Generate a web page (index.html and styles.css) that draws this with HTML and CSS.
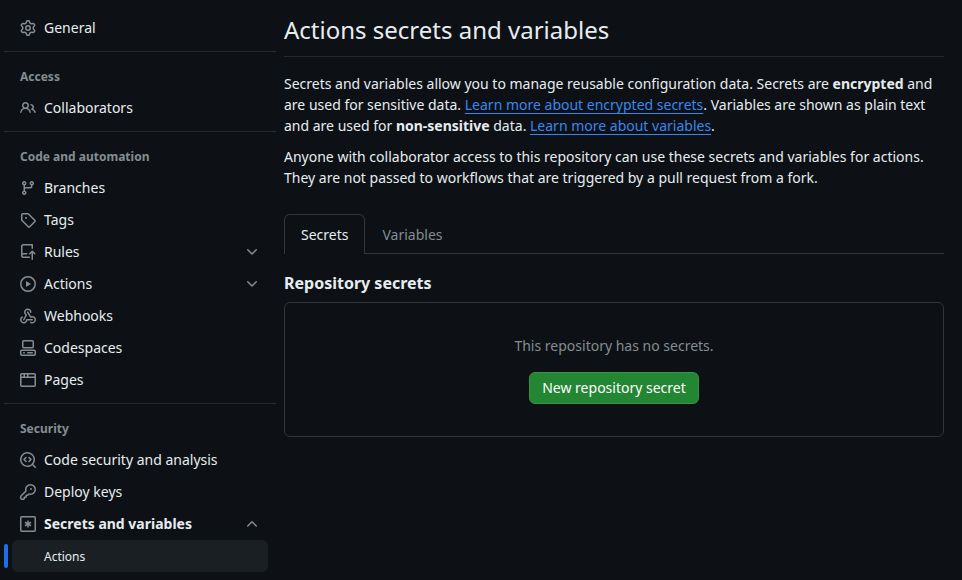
FILE: index.html
```html
<!DOCTYPE html>
<html lang="en">
<head>
<meta charset="utf-8">
<title>Actions secrets and variables</title>
<link rel="stylesheet" href="styles.css">
</head>
<body>
<div class="layout">
  <nav class="sidebar">
    <ul class="group">
      <li class="item"><svg class="icon" viewBox="0 0 16 16"><path d="M8 0a8.2 8.2 0 0 1 .701.031C9.444.095 9.99.645 10.16 1.29l.288 1.107c.018.066.079.158.212.224.231.114.454.243.668.386.123.082.233.09.299.071l1.103-.303c.644-.176 1.392.021 1.82.63.27.385.506.792.704 1.218.315.675.111 1.422-.364 1.891l-.814.806c-.049.048-.098.147-.088.294.016.257.016.515 0 .772-.01.147.038.246.088.294l.814.806c.475.469.679 1.216.364 1.891a7.977 7.977 0 0 1-.704 1.217c-.428.61-1.176.807-1.82.63l-1.102-.302c-.067-.019-.177-.011-.3.071a5.909 5.909 0 0 1-.668.386c-.133.066-.194.158-.211.224l-.29 1.106c-.168.646-.715 1.196-1.458 1.26a8.006 8.006 0 0 1-1.402 0c-.743-.064-1.289-.614-1.458-1.26l-.289-1.106c-.018-.066-.079-.158-.212-.224a5.738 5.738 0 0 1-.668-.386c-.123-.082-.233-.09-.299-.071l-1.103.303c-.644.176-1.392-.021-1.82-.63a8.12 8.12 0 0 1-.704-1.218c-.315-.675-.111-1.422.363-1.891l.815-.806c.05-.048.098-.147.088-.294a6.214 6.214 0 0 1 0-.772c.01-.147-.038-.246-.088-.294l-.815-.806C.635 6.045.431 5.298.746 4.623a7.92 7.92 0 0 1 .704-1.217c.428-.61 1.176-.807 1.82-.63l1.102.302c.067.019.177.011.3-.071.214-.143.437-.272.668-.386.133-.066.194-.158.211-.224l.29-1.106C6.009.645 6.556.095 7.299.03 7.53.01 7.764 0 8 0Zm-.571 1.525c-.036.003-.108.036-.137.146l-.289 1.105c-.147.561-.549.967-.998 1.189-.173.086-.34.183-.5.29-.417.278-.97.423-1.529.27l-1.103-.303c-.109-.03-.175.016-.195.045-.22.312-.412.644-.573.99-.014.031-.021.11.059.19l.815.806c.411.406.562.957.53 1.456a4.709 4.709 0 0 0 0 .582c.032.499-.119 1.05-.53 1.456l-.815.806c-.081.08-.073.159-.059.19.162.346.353.677.573.989.02.03.085.076.195.046l1.102-.303c.56-.153 1.113-.008 1.53.27.161.107.328.204.501.29.447.222.85.629.997 1.189l.289 1.105c.029.109.101.143.137.146a6.6 6.6 0 0 0 1.142 0c.036-.003.108-.036.137-.146l.289-1.105c.147-.561.549-.967.998-1.189.173-.086.34-.183.5-.29.417-.278.97-.423 1.529-.27l1.103.303c.109.029.175-.016.195-.045.22-.313.411-.644.573-.99.014-.031.021-.11-.059-.19l-.815-.806c-.411-.406-.562-.957-.53-1.456a4.709 4.709 0 0 0 0-.582c-.032-.499.119-1.05.53-1.456l.815-.806c.081-.08.073-.159.059-.19a6.464 6.464 0 0 0-.573-.989c-.02-.03-.085-.076-.195-.046l-1.102.303c-.56.153-1.113.008-1.53-.27a4.44 4.44 0 0 0-.501-.29c-.447-.222-.85-.629-.997-1.189l-.289-1.105c-.029-.11-.101-.143-.137-.146a6.6 6.6 0 0 0-1.142 0ZM11 8a3 3 0 1 1-6 0 3 3 0 0 1 6 0ZM9.5 8a1.5 1.5 0 1 0-3.001.001A1.5 1.5 0 0 0 9.5 8Z"/></svg><span>General</span></li>
    </ul>
    <ul class="group">
      <li class="heading">Access</li>
      <li class="item"><svg class="icon" viewBox="0 0 16 16"><path d="M2 5.5a3.5 3.5 0 1 1 5.898 2.549 5.508 5.508 0 0 1 3.034 4.084.75.75 0 1 1-1.482.235 4 4 0 0 0-7.9 0 .75.75 0 0 1-1.482-.236A5.507 5.507 0 0 1 3.102 8.05 3.493 3.493 0 0 1 2 5.5ZM11 4a3.001 3.001 0 0 1 2.22 5.018 5.01 5.01 0 0 1 2.56 3.012.749.749 0 0 1-.885.954.752.752 0 0 1-.549-.514 3.507 3.507 0 0 0-2.522-2.372.75.75 0 0 1-.574-.73v-.352a.75.75 0 0 1 .416-.672A1.5 1.5 0 0 0 11 5.5.75.75 0 0 1 11 4Zm-5.5-.5a2 2 0 1 0-.001 3.999A2 2 0 0 0 5.5 3.5Z"/></svg><span>Collaborators</span></li>
    </ul>
    <ul class="group">
      <li class="heading">Code and automation</li>
      <li class="item"><svg class="icon" viewBox="0 0 16 16"><path d="M9.5 3.25a2.25 2.25 0 1 1 3 2.122V6A2.5 2.5 0 0 1 10 8.5H6a1 1 0 0 0-1 1v1.128a2.251 2.251 0 1 1-1.5 0V5.372a2.25 2.25 0 1 1 1.5 0v1.836A2.493 2.493 0 0 1 6 7h4a1 1 0 0 0 1-1v-.628A2.25 2.25 0 0 1 9.5 3.25Zm-6 0a.75.75 0 1 0 1.5 0 .75.75 0 0 0-1.5 0Zm8.25-.75a.75.75 0 1 0 0 1.5.75.75 0 0 0 0-1.5ZM4.25 12a.75.75 0 1 0 0 1.5.75.75 0 0 0 0-1.5Z"/></svg><span>Branches</span></li>
      <li class="item"><svg class="icon" viewBox="0 0 16 16"><path d="M1 7.775V2.75C1 1.784 1.784 1 2.75 1h5.025c.464 0 .91.184 1.238.513l6.25 6.25a1.75 1.75 0 0 1 0 2.474l-5.026 5.026a1.75 1.75 0 0 1-2.474 0l-6.25-6.25A1.752 1.752 0 0 1 1 7.775Zm1.5 0c0 .066.026.13.073.177l6.25 6.25a.25.25 0 0 0 .354 0l5.025-5.025a.25.25 0 0 0 0-.354l-6.25-6.25a.25.25 0 0 0-.177-.073H2.75a.25.25 0 0 0-.25.25ZM6 5a1 1 0 1 1 0 2 1 1 0 0 1 0-2Z"/></svg><span>Tags</span></li>
      <li class="item"><svg class="icon" viewBox="0 0 16 16"><path d="M1 2.5A2.5 2.5 0 0 1 3.5 0h8.75a.75.75 0 0 1 .75.75v3.5a.75.75 0 0 1-1.5 0V1.5h-8a1 1 0 0 0-1 1v6.708A2.493 2.493 0 0 1 3.5 9h3.25a.75.75 0 0 1 0 1.5H3.5a1 1 0 0 0 0 2h5.75a.75.75 0 0 1 0 1.5H3.5A2.5 2.5 0 0 1 1 11.5Zm13.23 7.79h-.001l-1.224-1.224v6.184a.75.75 0 0 1-1.5 0V9.066L10.28 10.29a.75.75 0 0 1-1.06-1.061l2.505-2.504a.75.75 0 0 1 1.06 0L15.29 9.23a.751.751 0 0 1-.018 1.042.751.751 0 0 1-1.042.018Z"/></svg><span>Rules</span><svg class="icon chevron" viewBox="0 0 16 16"><path d="M12.78 5.22a.749.749 0 0 1 0 1.06l-4.25 4.25a.749.749 0 0 1-1.06 0L3.22 6.28a.749.749 0 1 1 1.06-1.06L8 8.939l3.72-3.719a.749.749 0 0 1 1.06 0Z"/></svg></li>
      <li class="item"><svg class="icon" viewBox="0 0 16 16"><path d="M8 0a8 8 0 1 1 0 16A8 8 0 0 1 8 0ZM1.5 8a6.5 6.5 0 1 0 13 0 6.5 6.5 0 0 0-13 0Zm4.879-2.773 4.264 2.559a.25.25 0 0 1 0 .428l-4.264 2.559A.25.25 0 0 1 6 10.559V5.442a.25.25 0 0 1 .379-.215Z"/></svg><span>Actions</span><svg class="icon chevron" viewBox="0 0 16 16"><path d="M12.78 5.22a.749.749 0 0 1 0 1.06l-4.25 4.25a.749.749 0 0 1-1.06 0L3.22 6.28a.749.749 0 1 1 1.06-1.06L8 8.939l3.72-3.719a.749.749 0 0 1 1.06 0Z"/></svg></li>
      <li class="item"><svg class="icon" viewBox="0 0 16 16"><path d="M5.5 4.25a2.25 2.25 0 0 1 4.5 0 .75.75 0 0 0 1.5 0 3.75 3.75 0 1 0-6.14 2.889l-2.272 4.258a.75.75 0 0 0 1.324.706L7 7.25a.75.75 0 0 0-.309-1.015A2.25 2.25 0 0 1 5.5 4.25Z"/><path d="M7.364 3.607a.75.75 0 0 1 1.03.257l2.608 4.349a3.75 3.75 0 1 1-.628 6.785.75.75 0 0 1 .752-1.299 2.25 2.25 0 1 0-.033-3.88.75.75 0 0 1-1.03-.256L7.107 4.636a.75.75 0 0 1 .257-1.03Z"/><path d="M2.9 8.776A.75.75 0 0 1 2.625 9.8 2.25 2.25 0 1 0 6 11.75a.75.75 0 0 1 .75-.751h5.5a.75.75 0 0 1 0 1.5H7.425a3.75 3.75 0 1 1-5.55-3.998.75.75 0 0 1 1.024.274Z"/></svg><span>Webhooks</span></li>
      <li class="item"><svg class="icon" viewBox="0 0 16 16"><path d="M0 11.25c0-.966.784-1.75 1.75-1.75h12.5c.966 0 1.75.784 1.75 1.75v3A1.75 1.75 0 0 1 14.25 16H1.75A1.75 1.75 0 0 1 0 14.25Zm2-9.5C2 .784 2.784 0 3.75 0h8.5C13.216 0 14 .784 14 1.75v5a1.75 1.75 0 0 1-1.75 1.75h-8.5A1.75 1.75 0 0 1 2 6.75Zm1.75-.25a.25.25 0 0 0-.25.25v5c0 .138.112.25.25.25h8.5a.25.25 0 0 0 .25-.25v-5a.25.25 0 0 0-.25-.25Zm-2 9.5a.25.25 0 0 0-.25.25v3c0 .138.112.25.25.25h12.5a.25.25 0 0 0 .25-.25v-3a.25.25 0 0 0-.25-.25ZM7 12.75a.75.75 0 0 1 .75-.75h4.5a.75.75 0 0 1 0 1.5h-4.5a.75.75 0 0 1-.75-.75Zm-4 0a.75.75 0 0 1 .75-.75h.5a.75.75 0 0 1 0 1.5h-.5a.75.75 0 0 1-.75-.75Z"/></svg><span>Codespaces</span></li>
      <li class="item"><svg class="icon" viewBox="0 0 16 16"><path d="M0 2.75C0 1.784.784 1 1.75 1h12.5c.966 0 1.75.784 1.75 1.75v10.5A1.75 1.75 0 0 1 14.25 15H1.75A1.75 1.75 0 0 1 0 13.25ZM14.5 6h-13v7.25c0 .138.112.25.25.25h12.5a.25.25 0 0 0 .25-.25Zm-6-3.5v2h6V2.75a.25.25 0 0 0-.25-.25ZM5 2.5v2h2v-2Zm-3.25 0a.25.25 0 0 0-.25.25V4.5h2v-2Z"/></svg><span>Pages</span></li>
    </ul>
    <ul class="group">
      <li class="heading">Security</li>
      <li class="item"><svg class="icon" viewBox="0 0 16 16"><path d="M8.47 4.97a.75.75 0 0 0 0 1.06L9.94 7.5 8.47 8.97a.75.75 0 1 0 1.06 1.06l2-2a.75.75 0 0 0 0-1.06l-2-2a.75.75 0 0 0-1.06 0ZM6.53 6.03a.75.75 0 0 0-1.06-1.06l-2 2a.75.75 0 0 0 0 1.06l2 2a.75.75 0 1 0 1.06-1.06L5.06 7.5l1.47-1.47Z"/><path d="M12.246 13.307a7.501 7.501 0 1 1 1.06-1.06l2.474 2.473a.749.749 0 1 1-1.06 1.06ZM1.5 7.5a6.002 6.002 0 0 0 3.608 5.504 6.002 6.002 0 0 0 6.486-1.117.748.748 0 0 1 .292-.293A6 6 0 1 0 1.5 7.5Z"/></svg><span>Code security and analysis</span></li>
      <li class="item"><svg class="icon" viewBox="0 0 16 16"><path d="M10.5 0a5.499 5.499 0 1 1-1.288 10.848l-.932.932a.749.749 0 0 1-.53.22H7v.75a.749.749 0 0 1-.22.53l-.5.5a.749.749 0 0 1-.53.22H5v.75a.749.749 0 0 1-.22.53l-.5.5a.749.749 0 0 1-.53.22h-2A1.75 1.75 0 0 1 0 14.25v-2c0-.199.079-.389.22-.53l4.932-4.932A5.5 5.5 0 0 1 10.5 0Zm-4 5.5c-.001.431.069.86.205 1.269a.75.75 0 0 1-.181.768L1.5 12.56v1.69c0 .138.112.25.25.25h1.69l.06-.06v-1.19a.75.75 0 0 1 .75-.75h1.19l.06-.06v-1.19a.75.75 0 0 1 .75-.75h1.19l1.023-1.025a.75.75 0 0 1 .768-.18A4 4 0 1 0 6.5 5.5ZM11 6a1 1 0 1 1 0-2 1 1 0 0 1 0 2Z"/></svg><span>Deploy keys</span></li>
      <li class="item current"><svg class="icon outline" viewBox="0 0 16 16"><rect x=".75" y=".75" width="14.5" height="14.5" rx="1"/><path d="M8 4.5v7M5 6.27l6 3.46M11 6.27 5 9.73"/></svg><span>Secrets and variables</span><svg class="icon chevron" viewBox="0 0 16 16"><path d="M3.22 10.53a.749.749 0 0 1 0-1.06l4.25-4.25a.749.749 0 0 1 1.06 0l4.25 4.25a.749.749 0 1 1-1.06 1.06L8 6.811 4.28 10.53a.749.749 0 0 1-1.06 0Z"/></svg></li>
      <li class="subitem">Actions</li>
    </ul>
  </nav>
  <main class="content">
    <h1 class="title">Actions secrets and variables</h1>
    <p class="text">Secrets and variables allow you to manage reusable configuration data. Secrets are <strong>encrypted</strong> and are used for sensitive data. <a class="link" href="#">Learn more about encrypted secrets</a>. Variables are shown as plain text and are used for <strong>non-sensitive</strong> data. <a class="link" href="#">Learn more about variables</a>.</p>
    <p class="text">Anyone with collaborator access to this repository can use these secrets and variables for actions. They are not passed to workflows that are triggered by a pull request from a fork.</p>
    <div class="tabs">
      <div class="tab selected">Secrets</div>
      <div class="tab">Variables</div>
    </div>
    <h2 class="subtitle">Repository secrets</h2>
    <section class="box">
      <p class="empty">This repository has no secrets.</p>
      <button class="button" type="button">New repository secret</button>
    </section>
  </main>
</div>
</body>
</html>
```
FILE: styles.css
```css
* {
  box-sizing: border-box;
}

body {
  margin: 0;
  height: 580px;
  overflow: hidden;
  background: #0d1115;
  color: #e6edf0;
  font: 14px/21px "Noto Sans", sans-serif;
}

.layout {
  display: flex;
  gap: 8px;
  padding: 0 18px 0 4px;
}

.sidebar {
  flex: 0 0 272px;
  padding-top: 12px;
}

.group {
  list-style: none;
  margin: 0;
  padding: 0;
}

.group + .group {
  margin-top: 7px;
  padding-top: 8px;
  border-top: 1px solid #25292c;
}

.heading {
  height: 32px;
  padding: 1px 0 0 16px;
  color: #848d92;
  font-size: 12px;
  font-weight: 700;
  line-height: 32px;
}

.item {
  display: flex;
  align-items: center;
  gap: 8px;
  height: 32px;
  padding: 0 16px;
  line-height: 20px;
}

.current {
  font-weight: 700;
}

.icon {
  flex: none;
  width: 16px;
  height: 16px;
  fill: #848d92;
}

.outline {
  fill: none;
  stroke: #848d92;
  stroke-width: 1.5;
}

.chevron {
  margin-left: auto;
}

.subitem {
  position: relative;
  height: 32px;
  margin: 0 8px;
  padding: 1px 0 0 32px;
  border-radius: 6px;
  background: #1a1f23;
  font-size: 12px;
  line-height: 32px;
}

.subitem::before {
  content: "";
  position: absolute;
  top: 4px;
  left: -8px;
  width: 4px;
  height: 24px;
  border-radius: 2px;
  background: #1f6feb;
}

.content {
  flex: 1;
  min-width: 0;
}

.title {
  height: 57px;
  margin: 0 0 16px;
  padding-top: 12px;
  border-bottom: 1px solid #25292c;
  font-size: 24px;
  font-weight: 400;
  line-height: 36px;
}

.text {
  margin: 0 0 10px;
}

.link {
  color: #3b86ee;
  text-decoration: underline;
  text-underline-offset: 3px;
}

.tabs {
  display: flex;
  height: 40px;
  margin-top: 26px;
  border-bottom: 1px solid #30353a;
}

.tab {
  height: 40px;
  padding: 8px 16px;
  border: 1px solid transparent;
  border-bottom: 0;
  color: #848d92;
  line-height: 23px;
}

.selected {
  border-color: #30353a;
  border-radius: 6px 6px 0 0;
  background: #0d1115;
  color: #e6edf0;
}

.subtitle {
  margin: 17px 0 7px;
  font-size: 16px;
  font-weight: 700;
  line-height: 24px;
}

.box {
  display: flex;
  flex-direction: column;
  align-items: center;
  height: 135px;
  padding-top: 32px;
  border: 1px solid #30353a;
  border-radius: 6px;
}

.empty {
  margin: 0 0 16px;
  color: #848d92;
}

.button {
  height: 32px;
  padding: 0 12px;
  border: 1px solid #369443;
  border-radius: 6px;
  background: #238633;
  color: #fff;
  font: 400 14px/20px "Noto Sans", sans-serif;
}
```
